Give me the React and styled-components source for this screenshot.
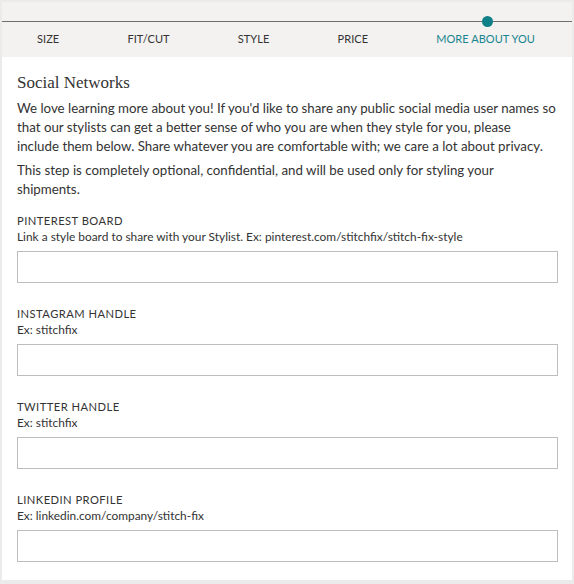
import styled, { createGlobalStyle } from "styled-components";

const GlobalStyle = createGlobalStyle`
  html, body {
    margin: 0;
    padding: 0;
    background: #ebebeb;
  }
  * { box-sizing: border-box; }
`;

const Frame = styled.div`
  width: 574px;
  height: 584px;
  padding: 2px 2px 4px 2px;
  background: #ebebeb;
  font-family: Lato, "Noto Sans", sans-serif;
  color: #333;
`;

const Panel = styled.div`
  height: 100%;
  background: #fff;
  display: flex;
  flex-direction: column;
`;

const Stepper = styled.div`
  position: relative;
  background: #f3f2f1;
  height: 55px;
  padding-top: 19px;
`;

const Track = styled.div`
  position: relative;
  height: 1px;
  background: #6e6e6e;
`;

const Dot = styled.span`
  position: absolute;
  left: 480px;
  top: -5px;
  width: 11px;
  height: 11px;
  border-radius: 50%;
  background: #0f7f88;
`;

const Steps = styled.div`
  display: flex;
  justify-content: space-between;
  padding: 0 37px 0 35px;
  margin-top: 10px;
`;

const Step = styled.span`
  font-size: 11px;
  letter-spacing: 0.05px;
  text-transform: uppercase;
  color: ${(p) => (p.$active ? "#17858e" : "#333")};
`;

const Body = styled.div`
  padding: 16px 15px 0 15px;
`;

const Title = styled.h2`
  margin: 0 0 6px;
  font-family: "Liberation Serif", "DejaVu Serif", serif;
  font-weight: normal;
  font-size: 17px;
  color: #333;
`;

const Para = styled.p`
  margin: 0 0 5px;
  font-size: 13.3px;
  line-height: 19px;
  white-space: nowrap;
`;

const Field = styled.div`
  margin-top: ${(p) => (p.$first ? "14px" : "23px")};
`;

const Label = styled.div`
  font-size: 11.2px;
  letter-spacing: 0.45px;
  text-transform: uppercase;
  line-height: 16px;
`;

const Help = styled.div`
  font-size: 11.9px;
  line-height: 16px;
  margin-bottom: 6px;
`;

const Input = styled.input`
  display: block;
  width: 541px;
  height: 32px;
  border: 1px solid #bdbdbd;
  background: #fff;
  outline: none;
  font: inherit;
`;

const fields = [
  { label: "Pinterest Board", help: "Link a style board to share with your Stylist. Ex: pinterest.com/stitchfix/stitch-fix-style" },
  { label: "Instagram Handle", help: "Ex: stitchfix" },
  { label: "Twitter Handle", help: "Ex: stitchfix" },
  { label: "LinkedIn Profile", help: "Ex: linkedin.com/company/stitch-fix" },
];

export default function App() {
  return (
    <Frame>
      <GlobalStyle />
      <Panel>
        <Stepper>
          <Track>
            <Dot />
          </Track>
          <Steps>
            <Step>Size</Step>
            <Step>Fit/Cut</Step>
            <Step>Style</Step>
            <Step>Price</Step>
            <Step $active>More About You</Step>
          </Steps>
        </Stepper>
        <Body>
          <Title>Social Networks</Title>
          <Para>
            We love learning more about you! If you'd like to share any public social media user names so
            <br />
            that our stylists can get a better sense of who you are when they style for you, please
            <br />
            include them below. Share whatever you are comfortable with; we care a lot about privacy.
          </Para>
          <Para>
            This step is completely optional, confidential, and will be used only for styling your
            <br />
            shipments.
          </Para>
          {fields.map((f, i) => (
            <Field key={f.label} $first={i === 0}>
              <Label>{f.label}</Label>
              <Help>{f.help}</Help>
              <Input type="text" />
            </Field>
          ))}
        </Body>
      </Panel>
    </Frame>
  );
}
